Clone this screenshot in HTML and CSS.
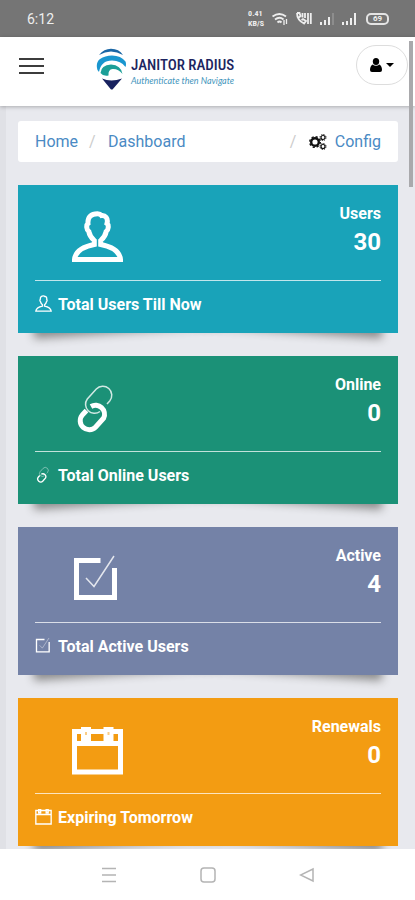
FILE: index.html
```html
<!DOCTYPE html>
<html lang="en">
<head>
<meta charset="utf-8">
<meta name="viewport" content="width=device-width, initial-scale=1">
<title>Janitor Radius - Dashboard</title>
<link rel="stylesheet" href="styles.css">
</head>
<body>
<svg class="defs" aria-hidden="true">
  <symbol id="user" viewBox="0 0 51 51">
    <path d="M25.500 2.800C19 2.800 15.500 6 16 12.500C14 14 14.500 19 16.800 20.500C17.500 25 19.500 27 22.300 29.500V33.500C12 35.500 3.500 39 2.500 48.500H48.500C47.500 39 39 35.500 28.700 33.500V29.500C31.500 27 33.500 25 34.200 20.500C36.500 19 37 14 35 12.500C36.500 7 33 4 29.500 4.500C28.500 3.200 27 2.800 25.500 2.800Z"/>
  </symbol>
  <symbol id="link" viewBox="0 0 51 51">
    <path class="thin" d="M35 22L37.700 19A9 9 0 0 0 24.300 7L15.300 17A9 9 0 0 0 28 29.500"/>
    <path d="M19 24.500A9 9 0 0 1 31.700 36L23.700 45A9 9 0 0 1 10.300 33L14.500 28.500"/>
  </symbol>
  <symbol id="check" viewBox="0 0 51 51">
    <path d="M28.500 7.500H4.500V44.500H42.500V15"/>
    <path class="thin" d="M14 25L22 33.500L42 3"/>
  </symbol>
  <symbol id="calendar" viewBox="0 0 51 51">
    <path d="M2.500 7.500H48.500V48H2.500ZM2.500 19.500H48.500"/>
    <path class="solid" d="M9 3H19V17H9ZM31.500 3H41.500V17H31.500Z"/>
    <path class="hole" d="M13 8h2v3h-2ZM35.500 8h2v3h-2Z"/>
  </symbol>
</svg>

<div class="status">
  <span class="clock">6:12</span>
  <div class="signals">
    <span class="rate"><span>0.41</span><span>KB/S</span></span>
    <svg width="16" height="14" viewBox="0 0 16 14" fill="none" stroke="currentColor" stroke-width="1.800"><path d="M.5 4.500Q7.500-.5 14 4.500M3 7.500Q7.500 4 11.500 7.500M5.500 10.500Q7.500 8.500 9.500 10.500"/><path d="M12 8v5M14.500 7v5" stroke-width="1.300"/></svg>
    <svg width="16" height="13" viewBox="0 0 16 13" fill="none" stroke="currentColor" stroke-width="1.800"><path d="M1 1Q1 8 8 11.500L10 9L7 7L5.500 8M1 1H3.500L4.500 4L3 5.500M6.500 1V5.500M9 1V6"/><path d="M12 1v11M14.800 1v11"/></svg>
    <svg width="14" height="12" viewBox="0 0 14 12" fill="currentColor"><path d="M0 9h2v3H0ZM4 7h2v5H4ZM8 4h2v8H8Z"/><path opacity=".2" d="M12 0h2v12h-2Z"/></svg>
    <svg width="16" height="12" viewBox="0 0 16 12" fill="currentColor"><path d="M0 9h2v3H0ZM4 8h2v4H4ZM8 5h2v7H8ZM12 0h2v12h-2Z"/></svg>
    <span class="battery">69</span>
  </div>
</div>

<header class="topbar">
  <button class="menu" aria-label="Menu"><i></i><i></i><i></i></button>
  <a class="brand" href="#" aria-label="Janitor Radius">
    <svg width="30" height="42" viewBox="0 0 30 42">
      <path fill="#1a66a5" d="M3 7Q8 .8 15 .8Q23 .8 27 7Q21 3.500 15 3.500Q9 3.500 3 7Z"/>
      <path fill="#1a96cf" d="M1 20Q0 14 4 11Q9 7.500 16 7.500Q25 7.500 29.500 13.500Q30.500 16 29.500 19Q25 12.500 16 12.500Q5 12.500 3 24Q1 22.500 1 20Z"/>
      <path fill="#1c9f98" d="M4.500 25Q5 17 15 16.500Q25 17 26.500 26Q22 20.500 16.500 21Q12 21.500 12.500 27.500Q7 28.500 4.500 25Z"/>
      <path fill="#18225f" d="M6 30.500Q15 34.500 26 30.500L16.500 41.500H15Z"/>
    </svg>
    <span class="wordmark"><span class="name">JANITOR RADIUS</span><span class="tagline">Authenticate then Navigate</span></span>
  </a>
  <button class="account" aria-label="Account">
    <svg width="12" height="14" viewBox="0 0 12 14"><ellipse cx="6" cy="3.500" rx="3.200" ry="3.500"/><path d="M2.500 6.500Q6 9 9.500 6.500Q12 8 12 12Q12 14 10 14H2Q0 14 0 12Q0 8 2.500 6.500Z"/></svg>
    <svg width="8" height="4" viewBox="0 0 8 4"><path d="M0 0h8L4 4Z"/></svg>
  </button>
</header>

<main>
  <nav class="crumbs" aria-label="Breadcrumb">
    <a href="#">Home</a><span class="sep">/</span><a href="#">Dashboard</a>
    <span class="sep end">/</span>
    <svg width="18" height="16" viewBox="0 0 18 16" fill="none" stroke="#111"><circle cx="6" cy="8" r="3.800" stroke-width="2.400"/><circle cx="6" cy="8" r="5.300" stroke-width="1.400" stroke-dasharray="2.200 1.960"/><circle cx="14" cy="3.500" r="2" stroke-width="1.200"/><circle cx="14" cy="3.500" r="3" stroke-dasharray="1.300 1.060"/><circle cx="14" cy="12.500" r="2" stroke-width="1.200"/><circle cx="14" cy="12.500" r="3" stroke-dasharray="1.300 1.060"/></svg>
    <a href="#">Config</a>
  </nav>

  <section class="card teal">
    <div class="body">
      <div class="top"><svg class="big"><use href="#user"/></svg><div class="stat"><h2>Users</h2><p>30</p></div></div>
      <div class="foot"><svg class="small"><use href="#user"/></svg>Total Users Till Now</div>
    </div>
  </section>
  <section class="card green">
    <div class="body">
      <div class="top"><svg class="big"><use href="#link"/></svg><div class="stat"><h2>Online</h2><p>0</p></div></div>
      <div class="foot"><svg class="small"><use href="#link"/></svg>Total Online Users</div>
    </div>
  </section>
  <section class="card slate">
    <div class="body">
      <div class="top"><svg class="big"><use href="#check"/></svg><div class="stat"><h2>Active</h2><p>4</p></div></div>
      <div class="foot"><svg class="small"><use href="#check"/></svg>Total Active Users</div>
    </div>
  </section>
  <section class="card orange">
    <div class="body">
      <div class="top"><svg class="big"><use href="#calendar"/></svg><div class="stat"><h2>Renewals</h2><p>0</p></div></div>
      <div class="foot"><svg class="small"><use href="#calendar"/></svg>Expiring Tomorrow</div>
    </div>
  </section>
</main>

<nav class="system" aria-label="System">
  <button aria-label="Recent apps"><svg width="16" height="16" viewBox="0 0 16 16"><path d="M1 1.500H15M1 8H15M1 14.500H15"/></svg></button>
  <button aria-label="Home screen"><svg width="16" height="16" viewBox="0 0 16 16"><rect x="1" y="1" width="14" height="14" rx="3"/></svg></button>
  <button aria-label="Back"><svg width="16" height="16" viewBox="0 0 16 16"><path d="M14 2V14L1.500 8Z"/></svg></button>
</nav>
<div class="scrollbar"></div>
</body>
</html>
```
FILE: styles.css
```css
* { box-sizing: border-box; }

body {
  margin: 0;
  height: 100vh;
  display: flex;
  flex-direction: column;
  overflow: hidden;
  background: #fff;
  font: 16px/24px Roboto, "Liberation Sans", sans-serif;
}

a { color: #4a8ac4; text-decoration: none; }
button { padding: 0; border: 0; background: none; font: inherit; }
svg { flex: none; display: block; }
h2, p { margin: 0; }
.defs { position: absolute; width: 0; height: 0; }

.status {
  flex: none;
  height: 37px;
  padding: 0 26px 0 27px;
  display: flex;
  align-items: center;
  justify-content: space-between;
  background: #757575;
  color: #eee;
}
.clock { font-size: 14px; }
.signals { display: flex; align-items: center; gap: 8px; }
.rate {
  display: flex;
  flex-direction: column;
  font: 700 8px/10px "Roboto Condensed", "Liberation Sans Narrow", sans-serif;
}
.battery {
  width: 23px;
  height: 12px;
  border: 2px solid #e4e4e4;
  border-radius: 5px;
  font-size: 8px;
  line-height: 8px;
  font-weight: 700;
  text-align: center;
}

.topbar {
  flex: none;
  height: 69px;
  padding: 8px 7px 0 19px;
  display: flex;
  align-items: flex-start;
  background: #fff;
  box-shadow: 0 1px 4px #0004;
  z-index: 1;
}
.menu {
  width: 25px;
  margin-top: 13px;
  display: grid;
  gap: 5px;
}
.menu i { height: 2px; background: #3c3c3c; }
.brand {
  margin: 3px auto 0 52px;
  display: flex;
  gap: 5px;
}
.wordmark { padding-top: 7px; display: flex; flex-direction: column; }
.name {
  font: 500 15px/20px "Roboto Condensed", "Liberation Sans Narrow", sans-serif;
  color: #1c2560;
}
.tagline {
  font: italic 9px/12px Lato, sans-serif;
  color: #4596bd;
}
.account {
  width: 52px;
  height: 40px;
  border: 1px solid #ddd;
  border-radius: 20px;
  display: flex;
  align-items: center;
  justify-content: center;
  gap: 4px;
}

main {
  flex: 1;
  min-height: 0;
  overflow: hidden;
  padding: 15px 17px 0 12px;
  border-left: 6px solid #e0e1e6;
  background: #e8e9ee;
}
.crumbs {
  height: 41px;
  margin-bottom: 23px;
  padding: 0 17px;
  display: flex;
  align-items: center;
  gap: 8px;
  border-radius: 3px;
  background: #fff;
}
.sep { width: 14px; padding-left: 3px; color: #ccc; }
.end { margin-left: auto; }

.card {
  position: relative;
  isolation: isolate;
  margin-bottom: 23px;
  color: #fff;
}
.card::before,
.card::after {
  content: "";
  position: absolute;
  z-index: -1;
  bottom: 16px;
  left: 14px;
  width: 50%;
  height: 20%;
  box-shadow: 0 15px 10px #888;
  transform: rotate(-4deg);
}
.card::after { left: auto; right: 14px; transform: rotate(4deg); }
.body { padding: 0 17px 16px; }
.teal .body { background: #19a3b9; }
.green .body { background: #1b9177; }
.slate .body { background: #7482a7; }
.orange .body { background: #f39c12; }

.top {
  height: 96px;
  padding-top: 18px;
  display: grid;
  grid-template-columns: 4fr 7fr;
  align-items: start;
  border-bottom: 1px solid #fffb;
}
.big, .small { fill: none; stroke: #fff; }
.big { width: 51px; height: 51px; margin-top: 8px; justify-self: center; stroke-width: 5px; }
.small { width: 17px; height: 17px; margin-bottom: 3px; stroke-width: 4px; }
.thin { stroke-width: 1.500px; opacity: .8; }
.solid { fill: #fff; stroke: none; }
.hole { fill: #f39c12; stroke: none; opacity: .5; }
.stat { text-align: right; font-weight: 700; }
.stat h2 { font-size: 16px; line-height: 22px; }
.stat p { font-size: 24px; line-height: 34px; }
.foot {
  padding-top: 12px;
  display: flex;
  align-items: center;
  gap: 6px;
  font-weight: 700;
}

.system {
  flex: none;
  height: 51px;
  display: flex;
  align-items: center;
  justify-content: center;
  gap: 83px;
  background: #fff;
}
.system svg { fill: none; stroke: #b4b4b4; stroke-width: 1.500px; }

.scrollbar {
  position: absolute;
  z-index: 2;
  top: 41px;
  right: 2px;
  width: 4px;
  height: 146px;
  background: #a9a9ac;
}
```
